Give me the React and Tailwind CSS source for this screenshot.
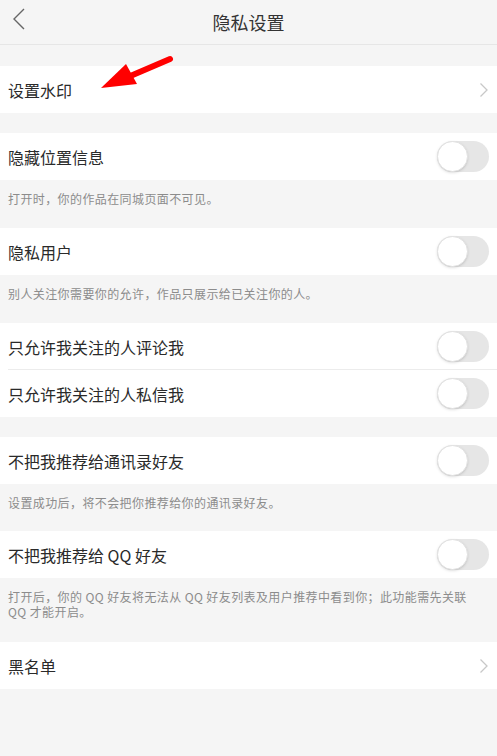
const font = { fontFamily: '"Noto Sans CJK SC", "Noto Sans", sans-serif' }

function Toggle() {
  return (
    <div className="w-[52px] h-[31px] rounded-full bg-[#e6e6e6] relative">
      <div className="absolute left-0 top-0 w-[31px] h-[31px] rounded-full bg-white border border-[#e2e2e2] shadow-sm" />
    </div>
  )
}

function Chevron() {
  return (
    <svg width="10" height="16" viewBox="0 0 10 16" fill="none">
      <path d="M1.5 1.5L8 8L1.5 14.5" stroke="#c8c8c8" strokeWidth="1.3" />
    </svg>
  )
}

function Row({ label, right, border }) {
  return (
    <div className="bg-white h-[47px] flex items-center justify-between pl-2 pr-2 relative">
      <span className="text-[16px] text-[#2a2a2a]">{label}</span>
      {right}
      {border && <div className="absolute left-2 right-0 bottom-0 h-px bg-[#ececec]" />}
    </div>
  )
}

function Desc({ children, h = 'h-[48px]' }) {
  return (
    <div className={`${h} pl-2 pr-6 pt-[11px] text-[12px] leading-[15px] tracking-[0.4px] text-[#8c8c8c]`}>{children}</div>
  )
}

export default function App() {
  return (
    <div className="w-[497px] h-[756px] bg-[#f5f5f5] relative overflow-hidden" style={font}>
      {/* Header */}
      <div className="h-[45px] flex items-center justify-center relative border-b border-[#e6e6e6]">
        <svg className="absolute left-[12px] top-[8px]" width="14" height="22" viewBox="0 0 14 22" fill="none">
          <path d="M12 1L2 11L12 21" stroke="#666" strokeWidth="1.4" />
        </svg>
        <span className="text-[18px] text-[#333]">隐私设置</span>
      </div>

      <div className="h-[21px]" />
      <Row label="设置水印" right={<Chevron />} />

      <div className="h-[20px]" />
      <Row label="隐藏位置信息" right={<Toggle />} />
      <Desc>打开时，你的作品在同城页面不可见。</Desc>

      <Row label="隐私用户" right={<Toggle />} />
      <Desc>别人关注你需要你的允许，作品只展示给已关注你的人。</Desc>

      <Row label="只允许我关注的人评论我" right={<Toggle />} border />
      <Row label="只允许我关注的人私信我" right={<Toggle />} />

      <div className="h-[20px]" />
      <Row label="不把我推荐给通讯录好友" right={<Toggle />} />
      <Desc h="h-[47px]">设置成功后，将不会把你推荐给你的通讯录好友。</Desc>

      <Row label="不把我推荐给 QQ 好友" right={<Toggle />} />
      <Desc h="h-[64px]">打开后，你的 QQ 好友将无法从 QQ 好友列表及用户推荐中看到你；此功能需先关联 QQ 才能开启。</Desc>

      <Row label="黑名单" right={<Chevron />} />

      {/* annotation arrow */}
      <svg className="absolute left-0 top-0" width="497" height="120" viewBox="0 0 497 120" fill="none">
        <path d="M170 59L128 77" stroke="#ff0000" strokeWidth="6" strokeLinecap="round" />
        <path d="M101 88L126 64L137 84Z" fill="#ff0000" />
      </svg>
    </div>
  )
}
